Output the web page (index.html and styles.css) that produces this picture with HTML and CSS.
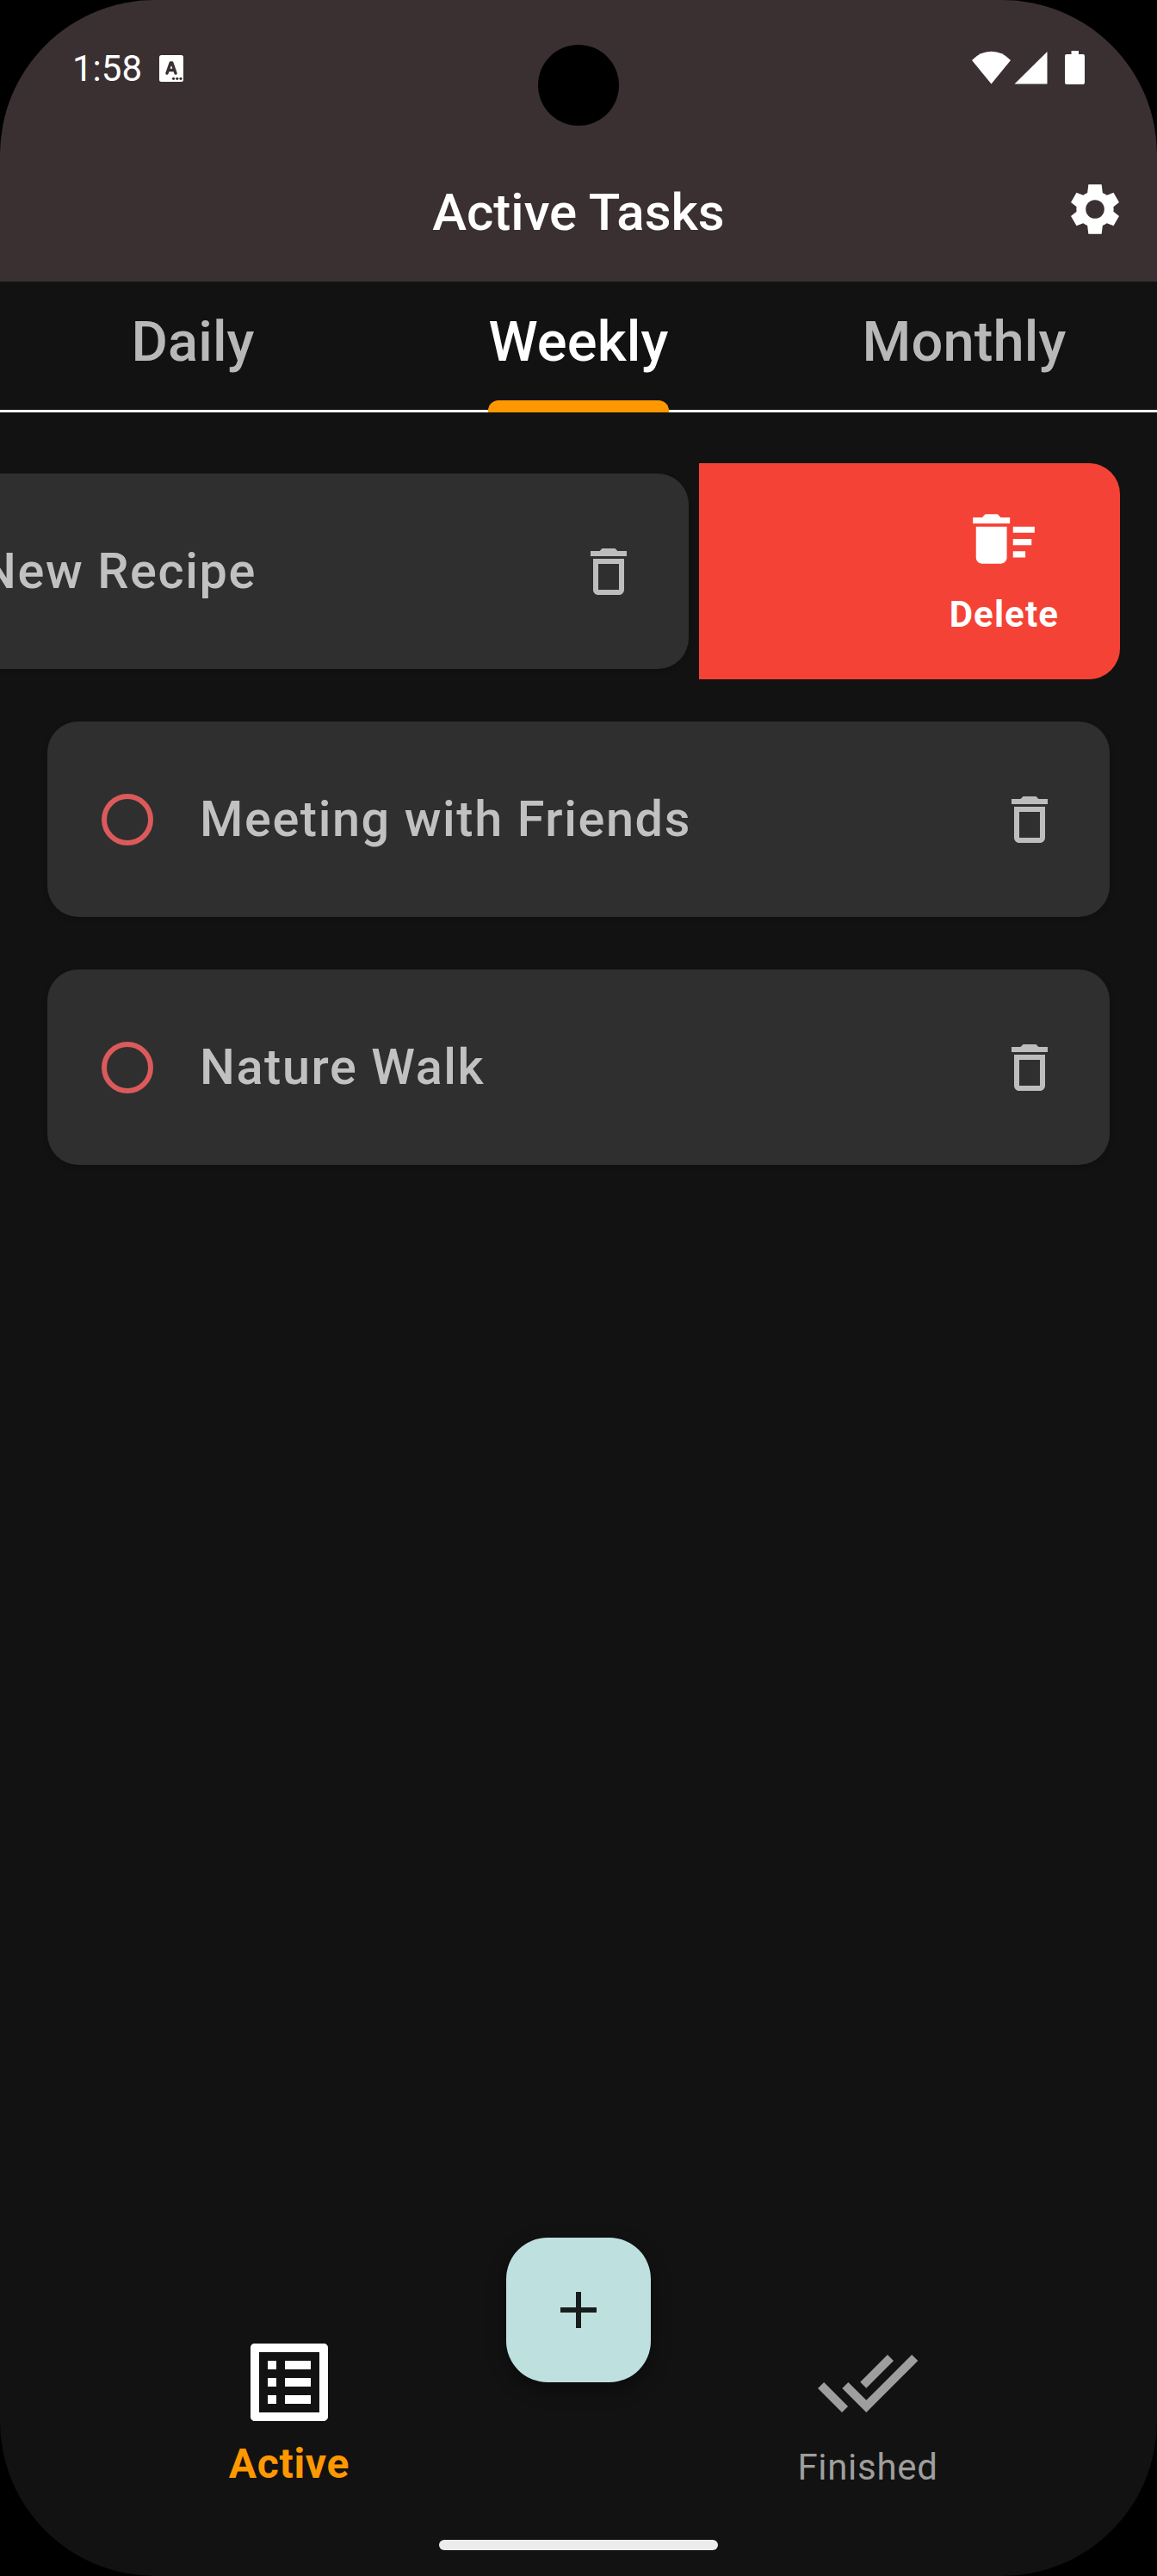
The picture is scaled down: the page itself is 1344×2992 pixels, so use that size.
FILE: index.html
```html
<!DOCTYPE html>
<html lang="en">
<head>
<meta charset="utf-8">
<title>Active Tasks</title>
<link rel="stylesheet" href="styles.css">
</head>
<body>
<svg class="defs" width="0" height="0" aria-hidden="true">
  <symbol id="trash" viewBox="0 0 24 24"><path d="M6 19c0 1.1.9 2 2 2h8c1.1 0 2-.9 2-2V7H6v12zM8 9h8v10H8V9zm7.5-5l-1-1h-5l-1 1H5v2h14V4z"/></symbol>
</svg>
<div class="phone">
  <header class="header">
    <div class="status">
      <span class="clock">1:58</span>
      <svg class="badge" viewBox="0 0 28 31"><rect width="28" height="31" rx="2.500" fill="#fff"/><path d="M9 21L13.200 9h1.600L19 21M11 17.500h6" fill="none" stroke="#3a3032" stroke-width="3.500" stroke-linecap="round" stroke-linejoin="round"/><g fill="#3a3032"><circle cx="16.500" cy="27.300" r="1.600"/><circle cx="20.800" cy="27.300" r="1.600"/><circle cx="25" cy="27.300" r="1.600"/></g></svg>
      <svg class="signals" viewBox="0 0 132 40" fill="#fff"><path d="M0 11Q9.500 .8 22.500 .8T45 11L22.500 38.500z"/><path d="M87.500 1V38.500H49.500z"/><path d="M115.500 0h8.500v4h5q2 0 2 2v31q0 2-2 2h-19q-2 0-2-2V6q0-2 2-2h5.500z"/></svg>
    </div>
    <div class="camera"></div>
    <div class="appbar">
      <h1 class="title">Active Tasks</h1>
      <svg class="gear" viewBox="0 0 24 24" fill="#fff"><path fill-rule="evenodd" d="M12 15.600A3.600 3.600 0 0 1 8.400 12 3.600 3.600 0 0 1 12 8.400 3.600 3.600 0 0 1 15.600 12 3.600 3.600 0 0 1 12 15.600M19.140 12.940c.04-.3.06-.61.06-.94s-.02-.64-.07-.94l2.200-1.720-2.160-3.740-2.600 1.010c-.49-.38-1.030-.7-1.620-.94L14.550 2.400h-5.100L9.050 5.670c-.59.24-1.130.57-1.620.94L4.830 5.600 2.670 9.340l2.200 1.720c-.05.3-.07.62-.07.94s.02.64.07.94l-2.200 1.720 2.160 3.740 2.600-1.010c.49.38 1.030.7 1.620.94l.4 3.270h5.100l.4-3.270c.59-.24 1.130-.56 1.620-.94l2.600 1.010 2.160-3.740z"/></svg>
    </div>
  </header>
  <nav class="tabs">
    <div class="tab">Daily</div>
    <div class="tab tab-on">Weekly</div>
    <div class="tab">Monthly</div>
  </nav>
  <main class="list">
    <div class="row swiped">
      <div class="card">
        <span class="label">New Recipe</span>
        <svg class="icon"><use href="#trash"/></svg>
      </div>
      <div class="delete">
        <div class="delete-body">
          <svg class="sweep" viewBox="0 0 24 24"><path d="M15 16h4v2h-4zm0-8h7v2h-7zm0 4h6v2h-6zM3 18c0 1.100.9 2 2 2h6c1.100 0 2-.9 2-2V8H3v10zM14 5h-3l-1-1H6L5 5H2v2h12z"/></svg>
          <span>Delete</span>
        </div>
      </div>
    </div>
    <div class="row">
      <div class="card">
        <span class="ring"></span>
        <span class="label">Meeting with Friends</span>
        <svg class="icon"><use href="#trash"/></svg>
      </div>
    </div>
    <div class="row">
      <div class="card">
        <span class="ring"></span>
        <span class="label">Nature Walk</span>
        <svg class="icon"><use href="#trash"/></svg>
      </div>
    </div>
  </main>
  <footer class="bottom">
    <div class="item item-on">
      <svg viewBox="0 0 24 24"><path d="M19 5v14H5V5h14m1.100-2H3.900c-.5 0-.9.4-.9.9v16.200c0 .4.4.9.9.9h16.200c.4 0 .9-.5.9-.9V3.900c0-.5-.5-.9-.9-.9zM11 7h6v2h-6V7zm0 4h6v2h-6v-2zm0 4h6v2h-6zM7 7h2v2H7zm0 4h2v2H7zm0 4h2v2H7z"/></svg>
      <span>Active</span>
    </div>
    <div class="item">
      <svg viewBox="0 0 24 24"><path d="M18 7l-1.410-1.410-6.340 6.340 1.410 1.410L18 7zm4.240-1.410L11.660 16.170 7.480 12l-1.410 1.410L11.660 19l12-12-1.420-1.410zM.41 13.410L6 19l1.410-1.410L1.830 12 .41 13.410z"/></svg>
      <span>Finished</span>
    </div>
  </footer>
  <div class="fab"><svg viewBox="0 0 24 24"><path d="M19 13h-6v6h-2v-6H5v-2h6V5h2v6h6v2z"/></svg></div>
  <div class="home"></div>
</div>
</body>
</html>
```
FILE: styles.css
```css
* { box-sizing: border-box; }
body { margin: 0; background: #000; font-family: Roboto, sans-serif; }
svg { display: block; flex: none; }
.defs { position: absolute; }
.phone {
  position: relative;
  display: flex;
  flex-direction: column;
  width: 1344px;
  height: 2992px;
  overflow: hidden;
  border-radius: 180px;
  background: #121212;
}
.header { height: 327px; background: #3a3032; }
.status { display: flex; height: 159px; padding: 59px 83px 0 84px; }
.clock { margin-top: -4px; width: 101px; font-size: 42px; line-height: 49px; color: #fff; }
.badge { width: 28px; height: 31px; margin-top: 5px; }
.signals { width: 132px; height: 40px; margin-left: auto; }
.camera {
  position: absolute;
  top: 52px;
  left: 625px;
  width: 94px;
  height: 94px;
  border-radius: 50%;
  background: #000;
}
.appbar {
  display: grid;
  grid-template-columns: 108px 1fr 108px;
  align-items: center;
  height: 168px;
}
.title {
  grid-column: 2;
  margin: 7px 0 0;
  text-align: center;
  font-size: 60px;
  font-weight: 500;
  line-height: 84px;
  color: #fff;
}
.gear { width: 72px; height: 72px; }
.tabs {
  display: grid;
  grid-template-columns: repeat(3, 1fr);
  justify-items: center;
  height: 152px;
  border-bottom: 3px solid #fff;
}
.tab {
  display: flex;
  flex-direction: column;
  height: 152px;
  padding-top: 31px;
  font-size: 65px;
  font-weight: 500;
  line-height: 78px;
  letter-spacing: 0.15px;
  color: #b8b8b8;
}
.tab-on { color: #fff; }
.tab-on::after {
  content: "";
  height: 14px;
  margin-top: auto;
  border-radius: 12px 12px 0 0;
  background: #ff9800;
}
.list { display: flex; flex-direction: column; flex: 1; gap: 37px; padding: 59px 43px 0; }
.row { height: 251px; padding: 12px; }
.card {
  display: flex;
  align-items: center;
  height: 227px;
  padding: 0 57px;
  border-radius: 36px;
  background: #2f2f2f;
  box-shadow: 0 3px 6px rgba(0, 0, 0, 0.15);
}
.swiped { display: flex; padding: 0; gap: 12px; margin-left: -43px; }
.swiped .card { width: 800px; margin-top: 12px; padding-left: 0; border-radius: 0 36px 36px 0; }
.swiped .label { margin-left: -22px; }
.ring { width: 60px; height: 60px; margin: 0 54px 0 6px; border: 6px solid #dc5a5b; border-radius: 50%; }
.label { font-size: 57.6px; font-weight: 500; line-height: 80px; letter-spacing: 1.6px; color: #c1c1c1; white-space: nowrap; }
.icon { width: 72px; height: 72px; margin-left: auto; fill: #bdbdbd; }
.delete {
  display: flex;
  justify-content: flex-end;
  width: 489px;
  height: 251px;
  padding-right: 71px;
  border-radius: 0 36px 36px 0;
  background: #f44336;
}
.delete-body {
  display: flex;
  flex-direction: column;
  align-items: center;
  padding-top: 45px;
  color: #fff;
  font-size: 42px;
  font-weight: 700;
  line-height: 50px;
  letter-spacing: 1.1px;
}
.sweep { width: 86px; height: 86px; margin-bottom: 20px; fill: #fff; }
.bottom { display: grid; grid-template-columns: 1fr 1fr; height: 285px; }
.item {
  display: flex;
  flex-direction: column;
  align-items: center;
  font-size: 42px;
  line-height: 50px;
  letter-spacing: 0.7px;
  color: #9e9e9e;
}
.item svg { width: 120px; height: 120px; margin-bottom: 14px; fill: #9e9e9e; }
.item-on { font-size: 48px; font-weight: 700; color: #ff9800; }
.item-on svg { margin-bottom: 10px; fill: #fff; }
.fab {
  position: absolute;
  top: 2599px;
  left: 588px;
  display: grid;
  place-items: center;
  width: 168px;
  height: 168px;
  border-radius: 48px;
  background: #bee1df;
  box-shadow: 0 8px 22px rgba(0, 0, 0, 0.4);
}
.fab svg { width: 72px; height: 72px; fill: #171d1d; }
.home {
  position: absolute;
  top: 2950px;
  left: 510px;
  width: 324px;
  height: 12px;
  border-radius: 6px;
  background: #ececec;
}
```
